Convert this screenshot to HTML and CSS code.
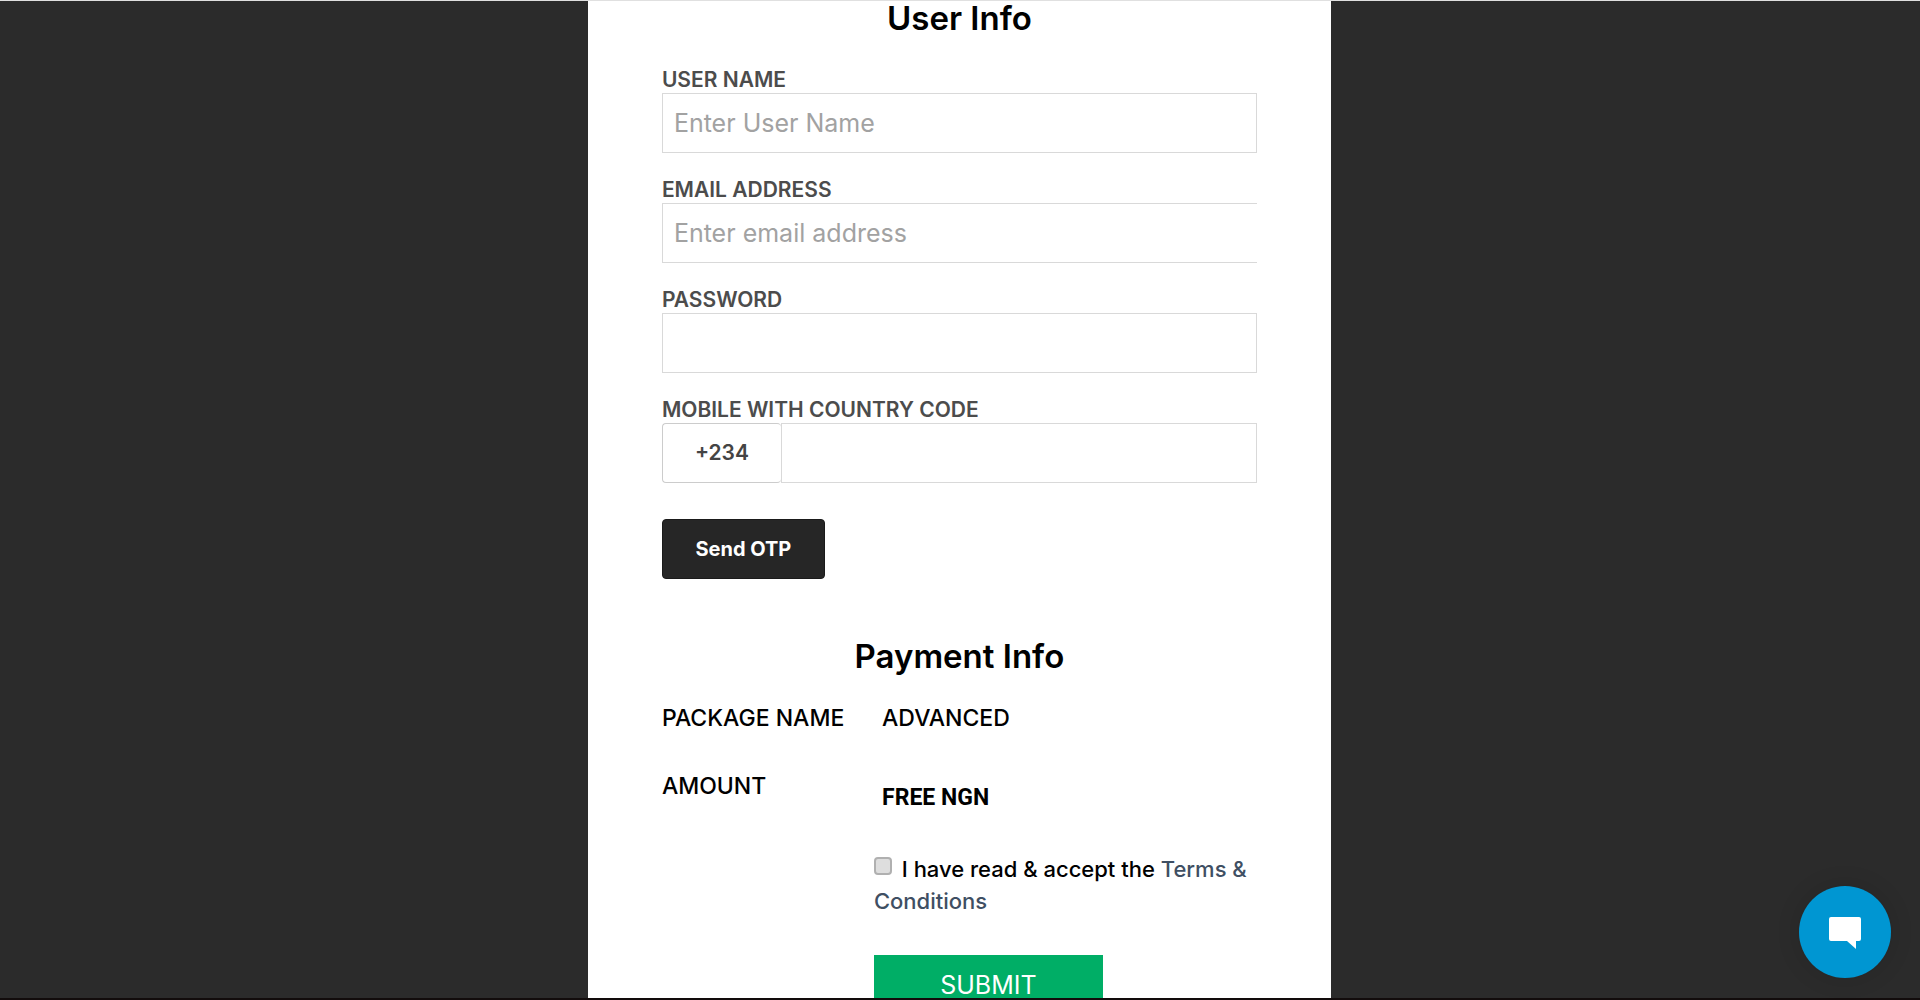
FILE: index.html
```html
<!DOCTYPE html>
<html lang="en">
<head>
<meta charset="utf-8">
<title>Sign Up</title>
<meta name="viewport" content="width=device-width, initial-scale=1">
<link rel="stylesheet" href="styles.css">
</head>
<body>
<main class="panel">
  <form class="signup">
    <h2 class="heading">User Info</h2>
    <div class="fields">
      <div class="field">
        <label class="label" for="name">USER NAME</label>
        <input class="input" id="name" type="text" placeholder="Enter User Name">
      </div>
      <div class="field">
        <label class="label" for="email">EMAIL ADDRESS</label>
        <input class="input input-open" id="email" type="email" placeholder="Enter email address">
      </div>
      <div class="field">
        <label class="label" for="password">PASSWORD</label>
        <input class="input" id="password" type="password">
      </div>
      <div class="field">
        <label class="label" for="mobile">MOBILE WITH COUNTRY CODE</label>
        <div class="phone">
          <span class="code">+234</span>
          <input class="input" id="mobile" type="tel">
        </div>
      </div>
    </div>
    <button class="otp" type="button">Send OTP</button>

    <h2 class="heading">Payment Info</h2>
    <dl class="summary">
      <dt>PACKAGE NAME</dt>
      <dd>ADVANCED</dd>
      <dt>AMOUNT</dt>
      <dd class="amount">FREE NGN</dd>
    </dl>
    <div class="confirm">
      <div class="terms">
        <input class="check" id="accept" type="checkbox">
        <label for="accept">I have read &amp; accept the</label>
        <a class="link" href="#terms">Terms &amp; Conditions</a>
      </div>
      <button class="submit" type="submit">SUBMIT</button>
    </div>
  </form>
</main>
<button class="chat" type="button" aria-label="Open chat">
  <svg width="34" height="34" viewBox="0 0 34 34" aria-hidden="true">
    <path fill="#fff" d="M3 2h28a2 2 0 0 1 2 2v20a2 2 0 0 1-2 2h-3v8l-9-8H3a2 2 0 0 1-2-2V4a2 2 0 0 1 2-2z"/>
  </svg>
</button>
</body>
</html>
```
FILE: styles.css
```css
* {
  box-sizing: border-box;
}

body {
  margin: 0;
  height: 100vh;
  overflow: hidden;
  background: #2b2b2b;
  border-top: 1px solid #e0e0e0;
  border-bottom: 2px solid #120c0c;
  color: #000;
  font: 500 22px/32px Inter, sans-serif;
}

input,
button {
  font-family: inherit;
}

.panel {
  width: 38.7%;
  min-width: 480px;
  margin-left: 30.62%;
  padding: 0 74px 40px;
  background: #fff;
}

.heading {
  margin: 0;
  font-size: 33px;
  font-weight: 600;
  line-height: 34px;
  text-align: center;
}

.fields {
  display: grid;
  gap: 24px;
  margin-top: 32px;
}

.label {
  display: block;
  color: #4c4c4c;
  font-size: 21px;
  font-weight: 600;
  line-height: 26px;
}

.input {
  display: block;
  width: 100%;
  height: 60px;
  padding: 0 11px;
  border: 1px solid #d9d9d9;
  border-radius: 0;
  background: #fff;
  font-size: 25px;
}

.input::placeholder {
  color: #a2a2a2;
  opacity: 1;
}

.input-open {
  border-right: 0;
}

.phone {
  display: flex;
}

.code {
  flex: 0 0 20%;
  height: 60px;
  border: 1px solid #ccc;
  border-right: 0;
  border-radius: 4px;
  color: #444;
  font-size: 21px;
  font-weight: 600;
  line-height: 58px;
  text-align: center;
}

.otp {
  display: block;
  width: 163px;
  height: 60px;
  margin: 36px 0 60px;
  padding: 0;
  border: 1px solid #1a1a1a;
  border-radius: 4px;
  background: #262626;
  color: #fff;
  font-size: 20px;
  font-weight: 700;
}

.summary {
  display: grid;
  grid-template-columns: 37% 1fr;
  row-gap: 36px;
  margin: 29px 0 0;
  font-size: 23px;
}

.summary dd {
  margin: 0;
}

.summary .amount {
  padding-top: 12px;
  font-family: Roboto, sans-serif;
  font-weight: 700;
}

.confirm {
  margin: 39px 0 0 212px;
}

.check {
  appearance: none;
  width: 18px;
  height: 18px;
  margin: 0 4px 2px 0;
  border: 2px solid #b0b0b0;
  border-radius: 4px;
  background: #dedede;
}

.link {
  color: #3f4f63;
  text-decoration: none;
}

.submit {
  display: block;
  width: 229px;
  height: 60px;
  margin-top: 38px;
  border: 0;
  background: #00ae66;
  color: #fff;
  font-size: 25px;
}

.chat {
  position: fixed;
  right: 29px;
  bottom: 22px;
  display: grid;
  place-items: center;
  width: 92px;
  height: 92px;
  padding: 0;
  border: 0;
  border-radius: 50%;
  background: #0096d2;
  box-shadow: 0 0 24px rgba(0, 0, 0, 0.12);
}
```
